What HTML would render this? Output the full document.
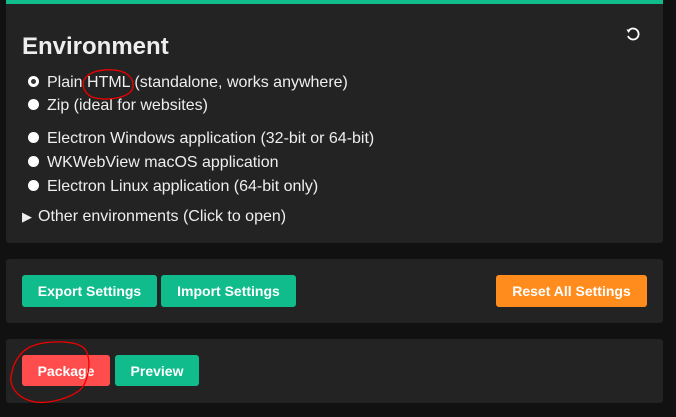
<!DOCTYPE html><html><head><style>
body{margin:0;width:676px;height:417px;background:#111;font-family:"Liberation Sans",sans-serif;color:#eee;position:relative;overflow:hidden}
.p{position:absolute;left:6px;width:657px;background:#232323;border-radius:3px}
.b{position:absolute;height:32px;border-radius:3px;color:#fff;font-weight:bold;font-size:14px;line-height:32px;text-align:center}
.g{background:#10bc8c}
.r{position:absolute;left:22px;font-size:16px;line-height:18px}
.r i{display:inline-block;width:11px;height:11px;border-radius:50%;background:#fff;margin:0 8px 0 6px;vertical-align:0px}
</style></head><body>
<div class="p" style="top:0;height:243px;border-radius:0 0 3px 3px"><div style="height:4px;background:#10bc8c"></div></div>
<div style="position:absolute;left:22px;top:33px;font-size:24px;font-weight:bold">Environment</div>
<svg style="position:absolute;left:624px;top:25px" width="18" height="18" viewBox="0 0 18 18"><path d="M4.5 6A5.5 5.5 0 1 1 4 11" fill="none" stroke="#fff" stroke-width="1.8"/><path d="M2.5 4.5L7 4.5L4.5 8Z" fill="#fff"/></svg>
<div class="r" style="top:74px"><i style="box-shadow:inset 0 0 0 3px #fff;background:#333"></i>Plain HTML (standalone, works anywhere)</div>
<div class="r" style="top:97px"><i></i>Zip (ideal for websites)</div>
<div class="r" style="top:130px"><i></i>Electron Windows application (32-bit or 64-bit)</div>
<div class="r" style="top:154px"><i></i>WKWebView macOS application</div>
<div class="r" style="top:178px"><i></i>Electron Linux application (64-bit only)</div>
<div class="r" style="top:208px"><span style="font-size:13px;margin-right:6px">&#9654;</span>Other environments (Click to open)</div>
<div class="p" style="top:259px;height:64px"></div>
<div class="b g" style="left:22px;top:275px;width:135px">Export Settings</div>
<div class="b g" style="left:161px;top:275px;width:135px">Import Settings</div>
<div class="b" style="left:496px;top:275px;width:151px;background:#ff8c1c">Reset All Settings</div>
<div class="p" style="top:339px;height:64px"></div>
<div class="b" style="left:22px;top:355px;width:88px;height:31px;background:#ff4d4d">Package</div>
<div class="b g" style="left:115px;top:355px;width:84px;height:31px">Preview</div>
<svg style="position:absolute;left:0;top:0" width="676" height="417"><path d="M84 80C88 72 100 69 114 70C128 71 136 80 132 90C126 99 104 101 92 97C84 93 82 86 84 80" fill="none" stroke="#e00" stroke-width="1.3"/><path d="M30 347C45 340 75 340 84 348C92 356 90 380 80 390C70 398 50 404 35 402C15 398 8 384 12 372C14 362 20 352 30 347" fill="none" stroke="#e00" stroke-width="1.3"/></svg>
</body></html>
